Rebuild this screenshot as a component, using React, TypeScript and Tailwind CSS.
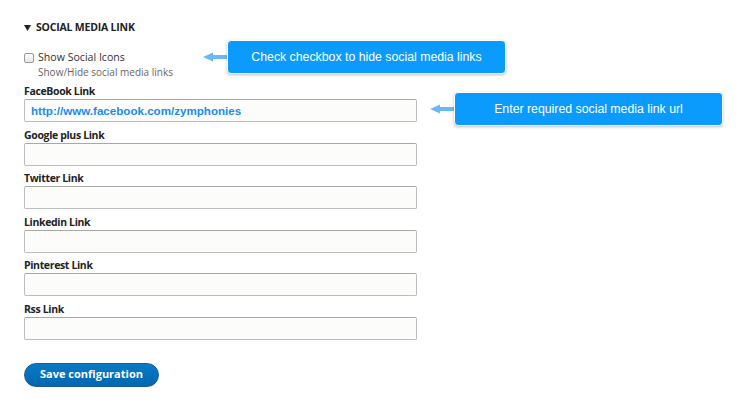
import React from "react";

const fields = [
  { label: "FaceBook Link", value: "http://www.facebook.com/zymphonies" },
  { label: "Google plus Link", value: "" },
  { label: "Twitter Link", value: "" },
  { label: "Linkedin Link", value: "" },
  { label: "Pinterest Link", value: "" },
  { label: "Rss Link", value: "" },
];

function Callout({ text, className }: { text: string; className: string }) {
  return (
    <div className={`absolute flex items-center ${className}`}>
      <svg width="24" height="10" viewBox="0 0 24 10" className="shrink-0">
        <polygon points="0,5 10,0.5 10,3 24,3 24,7 10,7 10,9.5" fill="#6bb9f4" />
      </svg>
      <div className="flex h-[34px] flex-1 items-center justify-center rounded-[4px] border border-white bg-[#0a9bfd] text-[12.3px] text-white shadow-[0_1px_3px_rgba(0,0,0,0.25)] [font-family:'Liberation_Sans',Arial,sans-serif]">
        {text}
      </div>
    </div>
  );
}

export default function App() {
  return (
    <div className="relative h-[407px] w-[752px] bg-white pl-6 pt-[21px] text-[#333] [font-family:'Open_Sans','Lucida_Grande',sans-serif]">
      <div className="flex h-[14px] items-center gap-[5px] text-[10.5px] font-bold uppercase tracking-[-0.2px] text-[#222]">
        <svg width="7" height="6" viewBox="0 0 7 6" className="shrink-0">
          <polygon points="0,0 7,0 3.5,6" fill="#222" />
        </svg>
        <span>Social Media Link</span>
      </div>

      <div className="mt-[16px] flex h-[14px] items-center gap-[4px]">
        <span className="h-[10px] w-[10px] rounded-[2px] border border-[#9a9a9a] bg-gradient-to-b from-white to-[#e6e6e6]" />
        <span className="text-[10.6px] text-[#333]">Show Social Icons</span>
      </div>
      <div className="h-[14px] pl-[14px] text-[10px] leading-[14px] text-[#666]">Show/Hide social media links</div>

      <div className="mt-[4px] flex flex-col">
        {fields.map((f) => (
          <div key={f.label} className="mb-[4.6px] flex flex-col">
            <label className="h-[15px] pt-[2px] text-[10.5px] font-bold leading-[13px] tracking-[-0.35px] text-[#222]">
              {f.label}
            </label>
            <div className="mt-[1px] flex h-[23px] w-[393px] items-center rounded-[2px] border border-[#bdbdbd] border-t-[#a8a8a8] bg-[#fcfcfa] px-[6px]">
              <span className="text-[11.6px] font-bold text-[#1a8cee] [font-family:'Liberation_Sans',Arial,sans-serif]">
                {f.value}
              </span>
            </div>
          </div>
        ))}
      </div>

      <button className="mt-[18px] h-[24px] w-[135px] rounded-full border border-[#1b5c92] bg-gradient-to-b from-[#0a7ac6] to-[#0067b0] text-[11px] font-bold text-white">
        Save configuration
      </button>

      <Callout text="Check checkbox to hide social media links" className="left-[203px] top-[40px] w-[303px]" />
      <Callout text="Enter required social media link url" className="left-[430px] top-[92px] w-[293px]" />
    </div>
  );
}
